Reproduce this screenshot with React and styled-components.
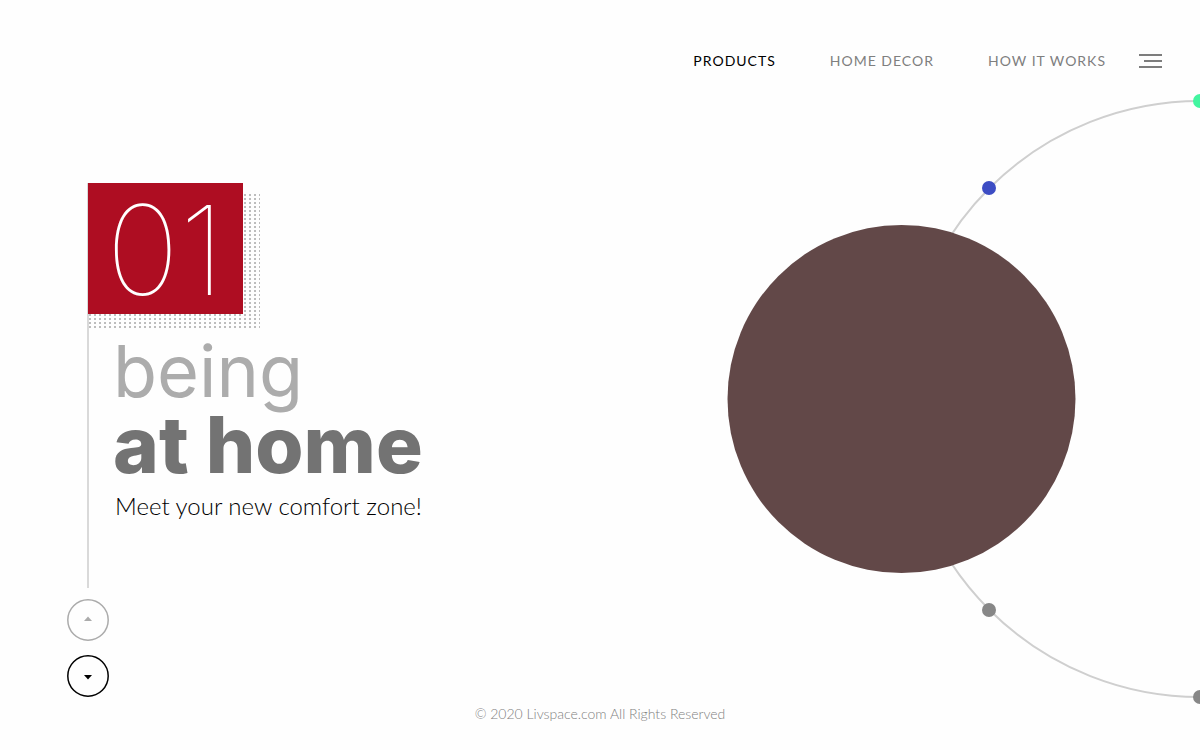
import React from "react";
import styled, { createGlobalStyle } from "styled-components";

const GlobalStyle = createGlobalStyle`
  *, *::before, *::after { box-sizing: border-box; }
  body {
    margin: 0;
    background: #fefefe;
    color: #000;
    font-family: Lato, "Liberation Sans", sans-serif;
  }
  h1, p { margin: 0; font-weight: 400; }
`;

const Page = styled.div`
  display: flex;
  flex-direction: column;
  overflow: hidden;
`;

const Header = styled.header`
  display: flex;
  justify-content: flex-end;
  align-items: center;
  height: 94px;
  padding: 28px 38px 0 24px;
`;

const Nav = styled.nav`
  display: flex;
  gap: 54px;
  margin-right: 33px;
`;

const NavLink = styled.a`
  font-size: 14px;
  line-height: 20px;
  letter-spacing: 1px;
  white-space: nowrap;
  text-decoration: none;
  color: ${(p) => (p.$active ? "#000" : "#7f7f7f")};
`;

const MenuButton = styled.button`
  display: flex;
  flex-direction: column;
  align-items: flex-end;
  gap: 4px;
  padding: 0;
  border: 0;
  background: none;
  cursor: pointer;
`;

const MenuBar = styled.span`
  width: ${(p) => (p.$short ? 18 : 23)}px;
  height: 2px;
  background: #7d7d7d;
`;

const Main = styled.main`
  display: flex;
  justify-content: space-between;
  align-items: flex-start;
`;

const Hero = styled.section`
  padding: 89px 0 0 67px;
`;

const Story = styled.div`
  min-height: 405px;
  margin-left: 20px;
  border-left: 2px solid #d9d9d9;
`;

const BadgeShadow = styled.div`
  width: 172px;
  height: 145px;
  margin-left: -1px;
  background:
    linear-gradient(#fefefe 11px, transparent 0),
    conic-gradient(at 2px 2px, transparent 75%, #bdbdbd 0) 1px 11px / 5px 4px;
`;

const Badge = styled.div`
  width: 155px;
  height: 131px;
  padding-left: 18px;
  background: #ae0d22;
  color: #fff;
  font-family: Inter, "Liberation Sans", sans-serif;
  font-size: 124px;
  font-weight: 100;
  line-height: 134px;
`;

const Title = styled.h1`
  padding: 6px 0 0 24px;
  font-family: Inter, "Liberation Sans", sans-serif;
`;

const TitleLine = styled.span`
  display: block;
  font-size: ${(p) => (p.$strong ? 78 : 72)}px;
  line-height: 74px;
  font-weight: ${(p) => (p.$strong ? 800 : 400)};
  color: ${(p) => (p.$strong ? "#737373" : "#acacac")};
`;

const Tagline = styled.p`
  padding: 8px 0 0 26px;
  font-size: 24px;
  line-height: 32px;
  font-weight: 300;
`;

const Pager = styled.div`
  display: flex;
  flex-direction: column;
  align-items: flex-start;
  gap: 14px;
  padding-top: 11px;
`;

const PagerButton = styled.button`
  width: 42px;
  height: 42px;
  padding: 0;
  border: 0;
  border-radius: 50%;
  background: none;
  color: ${(p) => (p.$muted ? "#ababab" : "#000")};
  cursor: pointer;

  svg { display: block; }
`;

const Orbit = styled.svg`
  display: block;
  flex: none;
  width: 473px;
  height: 610px;
`;

const Footer = styled.footer`
  padding: 0 24px 24px;
  font-size: 14px;
  line-height: 20px;
  font-weight: 300;
  text-align: center;
  color: #808080;
`;

const links = ["PRODUCTS", "HOME DECOR", "HOW IT WORKS"];

const dots = [
  { x: 473, y: 7, color: "#43f5a0" },
  { x: 262, y: 94, color: "#3d4dc4" },
  { x: 262, y: 516, color: "#878787" },
  { x: 473, y: 603, color: "#878787" },
];

function RoundArrow({ d }) {
  return (
    <svg width="42" height="42" viewBox="0 0 42 42" aria-hidden="true">
      <circle cx="21" cy="21" r="20.2" fill="none" stroke="currentColor" strokeWidth="1.5" />
      <path d={d} fill="currentColor" />
    </svg>
  );
}

export default function App() {
  return (
    <Page>
      <GlobalStyle />
      <Header>
        <Nav aria-label="Main">
          {links.map((label, i) => (
            <NavLink key={label} href="#" $active={i === 0}>
              {label}
            </NavLink>
          ))}
        </Nav>
        <MenuButton type="button" aria-label="Menu">
          <MenuBar />
          <MenuBar $short />
          <MenuBar />
        </MenuButton>
      </Header>
      <Main>
        <Hero>
          <Story>
            <BadgeShadow>
              <Badge>01</Badge>
            </BadgeShadow>
            <Title>
              <TitleLine>being</TitleLine>
              <TitleLine $strong>at home</TitleLine>
            </Title>
            <Tagline>Meet your new comfort zone!</Tagline>
          </Story>
          <Pager>
            <PagerButton type="button" aria-label="Previous" $muted>
              <RoundArrow d="M17 22L21 17.5L25 22Z" />
            </PagerButton>
            <PagerButton type="button" aria-label="Next">
              <RoundArrow d="M17 20H25L21 24.5Z" />
            </PagerButton>
          </Pager>
        </Hero>
        <Orbit viewBox="0 0 473 610" aria-hidden="true">
          <circle cx="473" cy="305" r="298" fill="none" stroke="#cfcfcf" strokeWidth="2" />
          <circle cx="174.5" cy="305" r="174" fill="#624848" />
          {dots.map((d) => (
            <circle key={`${d.x}-${d.y}`} cx={d.x} cy={d.y} r="7" fill={d.color} />
          ))}
        </Orbit>
      </Main>
      <Footer>© 2020 Livspace.com All Rights Reserved</Footer>
    </Page>
  );
}
